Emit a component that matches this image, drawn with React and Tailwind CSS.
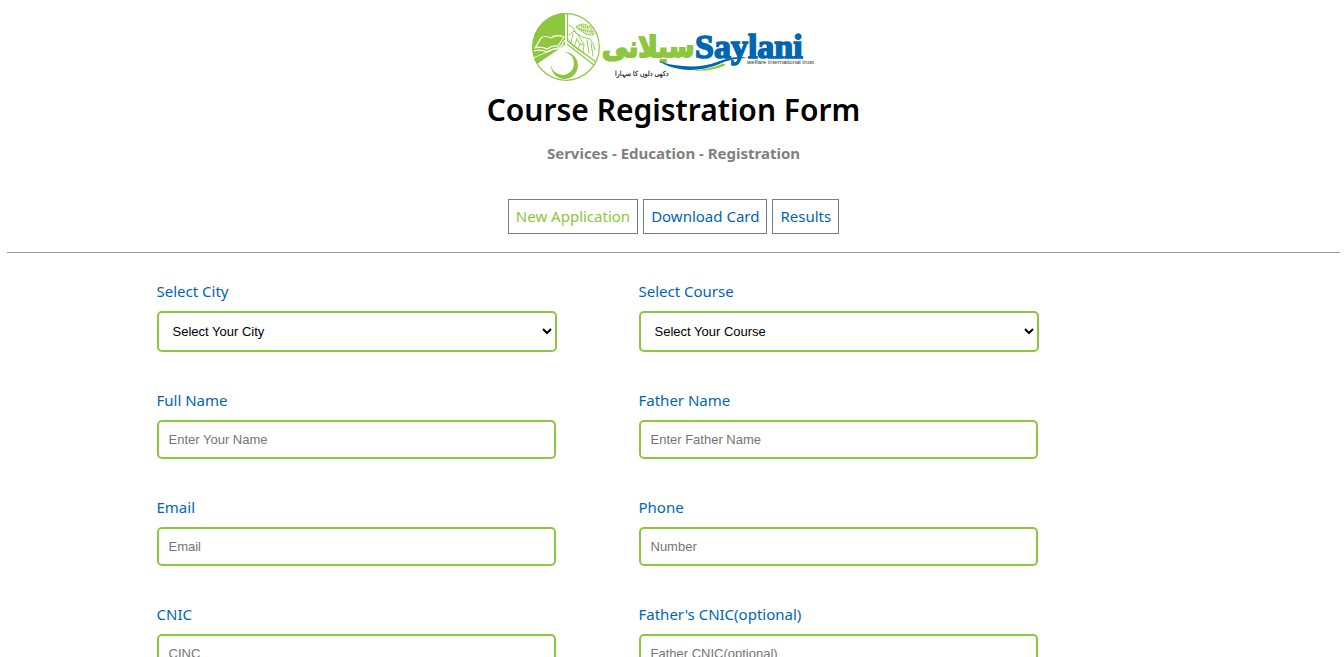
const GREEN = "#8dc63f";
const BLUE = "#0066b3";

function Logo() {
  return (
    <svg viewBox="0 0 286 70" className="h-[70px] w-[286px]" role="img" aria-label="Saylani Welfare International Trust">
      <circle cx="35" cy="35" r="33.3" fill="#fff" stroke={GREEN} strokeWidth="1.2" />
      <path d="M34 1A34 34 0 0 0 6 52L34 33Z" fill={GREEN} />
      <g stroke={GREEN} fill="none" strokeWidth="1.2">
        <path d="M36.5 2V29L65 50M36 32L63 53" />
      </g>
      <g stroke="#fff" fill="none" strokeWidth="1.2" strokeLinejoin="round">
        <path d="M4 36L10 26Q14 23 20 26Q25 22 33 25L27 34Q21 33 16 37Q10 34 4 36Z" />
        <path d="M3 39Q10 37 16 40Q21 36 28 37L34 28" />
        <path d="M2 46L33 33" strokeWidth="0.8" />
      </g>
      <g stroke={GREEN} fill="none" strokeWidth="0.9" strokeLinecap="round" strokeLinejoin="round">
        <path d="M38 13Q43 15 45 21L51 25L59 27Q63 31 64 38" />
        <path d="M38 23L43 19L48 24L53 33L49 32L46 27M42 22L40 31M46 27L43 35M49 32L47 38M53 33L52 40M56 28L58 41M60 31L62 44" />
        <path d="M38 28L41 33L46 37L54 42" />
      </g>
      <path d="M45 15Q52 9 60 16L63 22Q57 24 52 20Z" fill={GREEN} fillOpacity="0.3" stroke={GREEN} strokeWidth="1.5" strokeDasharray="1.2 0.8" />
      <path d="M48 17L61 20M50 14L58 16" stroke={GREEN} strokeWidth="1.6" strokeDasharray="1.2 0.8" />
      <path d="M32 40A13.5 13.5 0 1 1 20 52A11.5 11.5 0 1 0 32 40Z" fill={GREEN} />
      <text x="71" y="45" fontSize="29" fontWeight="700" fontFamily="'DejaVu Sans Condensed', 'DejaVu Sans', sans-serif" fill={GREEN} stroke={GREEN} strokeWidth="1.8">سیلانی</text>
      <text x="84" y="64" fontSize="7" fontFamily="'DejaVu Sans Condensed', 'DejaVu Sans', sans-serif" fill="#222" stroke="#222" strokeWidth="0.2">دکھی دلوں کا سہارا</text>
      <path d="M127 48Q134 52 143 53Q168 57 186 50Q205 43 216 46Q200 46 186 53Q164 61 144 56Q134 54 127 48Z" fill={BLUE} />
      <path d="M162 58.5Q180 57 192 51.5L195 53Q180 60 162 58.5Z" fill={GREEN} />
      <text x="164" y="46" fontSize="34" fontWeight="700" fontFamily="'Liberation Serif', serif" fill={BLUE} stroke={BLUE} strokeWidth="1.6">Saylani</text>
      <text x="216" y="52" fontSize="6" fontFamily="'Liberation Sans', sans-serif" fill="#333">welfare international trust</text>
    </svg>
  );
}

const tabs = ["New Application", "Download Card", "Results"];

const fields = [
  { id: "city", label: "Select City", option: "Select Your City" },
  { id: "course", label: "Select Course", option: "Select Your Course" },
  { id: "name", label: "Full Name", placeholder: "Enter Your Name" },
  { id: "father", label: "Father Name", placeholder: "Enter Father Name" },
  { id: "email", label: "Email", placeholder: "Email", type: "email" },
  { id: "phone", label: "Phone", placeholder: "Number", type: "tel" },
  { id: "cnic", label: "CNIC", placeholder: "CINC" },
  { id: "father-cnic", label: "Father's CNIC(optional)", placeholder: "Father CNIC(optional)" },
];

function Field({ id, label, option, placeholder, type = "text" }) {
  return (
    <div className="flex flex-col gap-2">
      <label htmlFor={id} className="self-start text-[15px] leading-6 text-[#0066b3]">{label}</label>
      {option ? (
        <select id={id} className="h-[41px] w-full rounded-[5px] border-2 border-[#8dc63f] bg-white px-[10px] font-['Liberation_Sans',sans-serif] text-[13px] text-black">
          <option>{option}</option>
        </select>
      ) : (
        <input id={id} type={type} placeholder={placeholder} className="h-[39px] w-full max-w-[399px] rounded-[5px] border-2 border-[#8dc63f] bg-white px-[10px] font-['Liberation_Sans',sans-serif] text-[13px] text-black placeholder:text-[#757575]" />
      )}
    </div>
  );
}

export default function App() {
  return (
    <main className="bg-white pt-3 pr-1 pb-8 pl-[7px] font-['Noto_Sans',sans-serif]">
      <header className="flex flex-col items-center">
        <Logo />
        <h1 className="mt-2 text-center text-[30px] leading-10 font-semibold text-black">Course Registration Form</h1>
        <p className="mt-[11px] text-[15px] leading-6 font-bold text-[#808080]">Services - Education - Registration</p>
        <nav className="mt-[34px] flex gap-[5px]">
          {tabs.map((tab, i) => (
            <a key={tab} href="#" className={`border border-[#708090] px-[7px] py-1 text-[15px] leading-[25px] ${i === 0 ? "text-[#8dc63f]" : "text-[#0066b3]"}`}>{tab}</a>
          ))}
        </nav>
      </header>
      <hr className="mt-[18px] border-t border-[#999]" />
      <form className="mx-auto grid max-w-[1034px] grid-cols-1 gap-x-[82px] gap-y-9 pt-[26px] lg:grid-cols-[400px_400px]">
        {fields.map((f) => <Field key={f.id} {...f} />)}
      </form>
    </main>
  );
}
